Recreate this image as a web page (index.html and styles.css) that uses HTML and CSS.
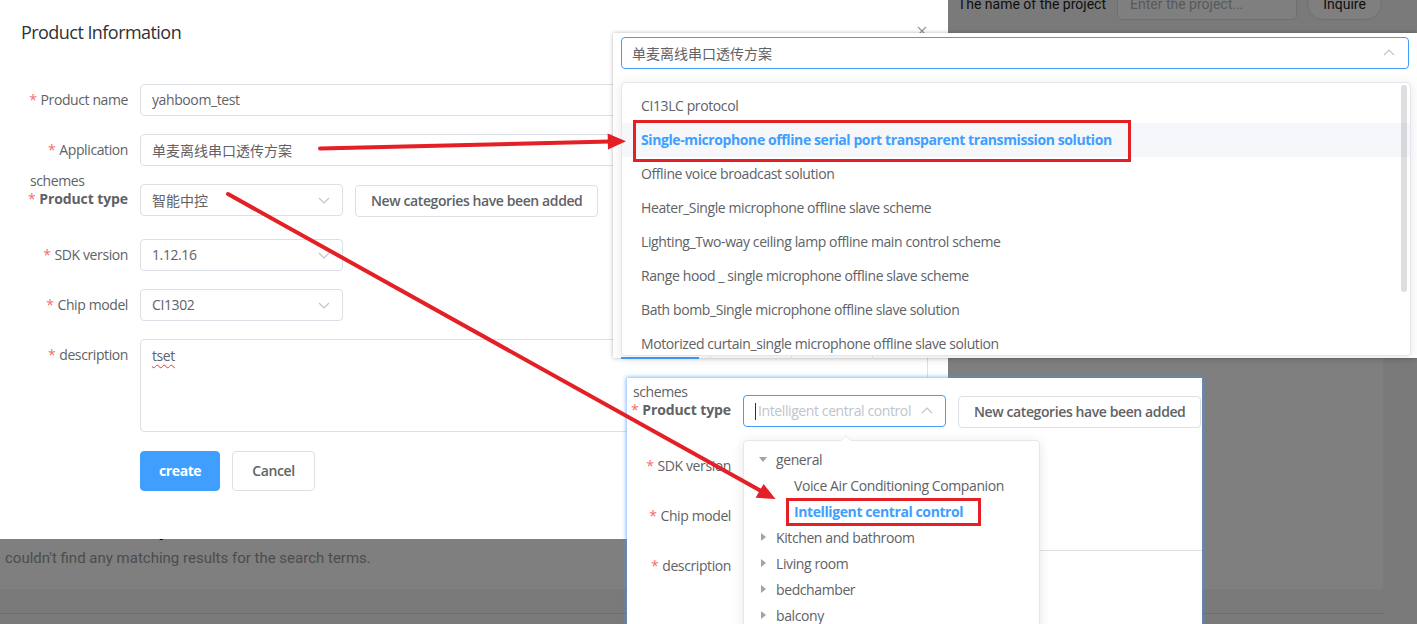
FILE: index.html
```html
<!DOCTYPE html>
<html lang="en">
<head>
<meta charset="utf-8">
<title>Product Information</title>
<link rel="stylesheet" href="styles.css">
</head>
<body>

<!-- project list page behind the dialog -->
<div class="page">
  <header class="topbar">
    <form class="search">
      <span class="search-label">The name of the project</span>
      <span class="search-input">Enter the project...</span>
      <span class="search-btn">Inquire</span>
    </form>
  </header>
  <main class="card">
    <h2 class="empty-title">No related items yet</h2>
    <p class="empty-text">couldn't find any matching results for the search terms.</p>
  </main>
  <div class="card-next"></div>
</div>

<div class="mask"></div>

<!-- dialog -->
<section class="dialog">
  <div class="dialog-head">
    <h1 class="dialog-title">Product Information</h1>
    <svg class="dialog-close" viewBox="0 0 10 10" width="10" height="10"><path d="M1 1l8 8M9 1l-8 8" stroke="#909399" stroke-width="1.2" fill="none"/></svg>
  </div>
  <div class="dialog-body">
    <div class="row">
      <label class="label"><span class="req">*</span>Product name</label>
      <div class="field"><div class="input">yahboom_test</div></div>
    </div>
    <div class="row">
      <label class="label"><span class="req">*</span>Application</label>
      <div class="field"><div class="input"><span class="zh">单麦离线串口透传方案</span></div></div>
    </div>
    <div class="row row-type">
      <label class="label label-stack">
        <span class="label-note">schemes</span>
        <span class="label-main"><span class="req">*</span><b>Product type</b></span>
      </label>
      <div class="field field-inline">
        <div class="input select"><span class="zh">智能中控</span>
          <svg class="chev" viewBox="0 0 12 7" width="12" height="7"><path d="M1 1l5 5 5-5" fill="none" stroke="#c0c4cc" stroke-width="1.2"/></svg>
        </div>
        <span class="btn">New categories have been added</span>
      </div>
    </div>
    <div class="row">
      <label class="label"><span class="req">*</span>SDK version</label>
      <div class="field"><div class="input select">1.12.16
        <svg class="chev" viewBox="0 0 12 7" width="12" height="7"><path d="M1 1l5 5 5-5" fill="none" stroke="#c0c4cc" stroke-width="1.2"/></svg>
      </div></div>
    </div>
    <div class="row">
      <label class="label"><span class="req">*</span>Chip model</label>
      <div class="field"><div class="input select">CI1302
        <svg class="chev" viewBox="0 0 12 7" width="12" height="7"><path d="M1 1l5 5 5-5" fill="none" stroke="#c0c4cc" stroke-width="1.2"/></svg>
      </div></div>
    </div>
    <div class="row row-desc">
      <label class="label"><span class="req">*</span>description</label>
      <div class="field"><div class="input textarea"><span class="typo">tset</span></div></div>
    </div>
    <div class="actions">
      <span class="btn btn-primary">create</span>
      <span class="btn btn-plain">Cancel</span>
    </div>
  </div>
</section>

<!-- application scheme select, opened -->
<div class="shot shot-app">
  <div class="input input-focus app-input"><span class="zh">单麦离线串口透传方案</span>
    <svg class="chev chev-up" viewBox="0 0 12 7" width="12" height="7"><path d="M1 6l5-5 5 5" fill="none" stroke="#c0c4cc" stroke-width="1.2"/></svg>
  </div>
  <div class="popper app-list">
    <ul class="options">
      <li>CI13LC protocol</li>
      <li class="selected">Single-microphone offline serial port transparent transmission solution</li>
      <li>Offline voice broadcast solution</li>
      <li>Heater_Single microphone offline slave scheme</li>
      <li>Lighting_Two-way ceiling lamp offline main control scheme</li>
      <li>Range hood _ single microphone offline slave scheme</li>
      <li>Bath bomb_Single microphone offline slave solution</li>
      <li>Motorized curtain_single microphone offline slave solution</li>
    </ul>
    <span class="scrollbar"></span>
    <span class="mark mark-app"></span>
  </div>
  <div class="tabs"><span class="tab tab-on"></span><span class="tab"></span><span class="tab"></span></div>
</div>

<!-- product type cascader, opened -->
<div class="shot shot-type">
  <div class="row row-type">
    <label class="label label-stack label-narrow">
      <span class="label-note">schemes</span>
      <span class="label-main"><span class="req">*</span><b>Product type</b></span>
    </label>
    <div class="field field-inline">
      <div class="input select input-focus"><span class="caret-cursor"></span><span class="placeholder">Intelligent central control</span>
        <svg class="chev chev-up" viewBox="0 0 12 7" width="12" height="7"><path d="M1 6l5-5 5 5" fill="none" stroke="#c0c4cc" stroke-width="1.2"/></svg>
      </div>
      <span class="btn">New categories have been added</span>
    </div>
  </div>
  <div class="row">
    <label class="label label-narrow"><span class="req">*</span>SDK version</label>
    <div class="field"><div class="input select"></div></div>
  </div>
  <div class="row">
    <label class="label label-narrow"><span class="req">*</span>Chip model</label>
    <div class="field"><div class="input select"></div></div>
  </div>
  <div class="row">
    <label class="label label-narrow"><span class="req">*</span>description</label>
    <div class="field"><div class="input textarea textarea-wide"></div></div>
  </div>

  <div class="popper cascader">
    <ul class="tree">
      <li class="node open"><i class="tri tri-down"></i>general</li>
      <li class="leaf">Voice Air Conditioning Companion</li>
      <li class="leaf selected">Intelligent central control</li>
      <li class="node"><i class="tri tri-right"></i>Kitchen and bathroom</li>
      <li class="node"><i class="tri tri-right"></i>Living room</li>
      <li class="node"><i class="tri tri-right"></i>bedchamber</li>
      <li class="node"><i class="tri tri-right"></i>balcony</li>
    </ul>
    <span class="mark mark-type"></span>
  </div>
</div>

<!-- callout arrows -->
<svg class="arrows" viewBox="0 0 1417 624" width="1417" height="624">
  <g stroke="#e41f26" stroke-width="4" stroke-linecap="round" fill="none">
    <line x1="320" y1="148.5" x2="610" y2="141.6"/>
    <line x1="228" y1="194" x2="762" y2="491.5"/>
  </g>
  <g fill="#e41f26">
    <polygon points="626,141.2 607.6,133.4 608,149.4"/>
    <polygon points="775.5,499 755.6,497.8 763.6,484"/>
  </g>
</svg>

</body>
</html>
```

FILE: styles.css
```css
* { box-sizing: border-box; }

html, body { margin: 0; padding: 0; }

body {
  position: relative;
  width: 1417px;
  height: 624px;
  overflow: hidden;
  background: #f4f4f4;
  font-family: "Open Sans", "Noto Sans CJK SC", sans-serif;
  font-size: 14px;
  letter-spacing: -0.4px;
  color: #606266;
}

ul { list-style: none; margin: 0; padding: 0; }

.zh {
  font-family: "Noto Sans CJK SC", sans-serif;
  letter-spacing: 0;
}

/* ---------- page behind ---------- */
.page {
  margin-top: -12px;
  padding-right: 34px;
  font-family: Roboto, "Noto Sans CJK SC", sans-serif;
  letter-spacing: 0;
}

.topbar {
  height: 52px;
  display: flex;
  justify-content: flex-end;
}

.search {
  display: flex;
  align-items: center;
  height: 32px;
  margin: 0;
}

.search-label { color: #222; margin-right: 11px; }

.search-input {
  width: 180px;
  height: 32px;
  line-height: 30px;
  padding: 0 12px;
  border: 1px solid #dcdfe6;
  border-radius: 4px;
  background: #fff;
  color: #b0b3b8;
}

.search-btn {
  width: 75px;
  height: 32px;
  line-height: 30px;
  margin-left: 10px;
  margin-right: 1px;
  text-align: center;
  border: 1px solid #dcdfe6;
  border-radius: 16px;
  background: #fff;
  color: #222;
}

.card {
  height: 549px;
  background: #fff;
  display: flex;
  flex-direction: column;
  justify-content: flex-end;
  padding: 0 0 21px 5px;
}

.empty-title {
  margin: 0 0 6px;
  font-size: 20px;
  line-height: 26px;
  color: #111;
}

.empty-text {
  margin: 0;
  font-size: 15px;
  line-height: 20px;
  color: #999;
}

.card-next {
  height: 11px;
  margin-top: 24px;
  border-top: 1px solid #dcdcdc;
}

.mask {
  position: absolute;
  inset: 0;
  background: rgba(0, 0, 0, 0.5);
}

/* ---------- dialog ---------- */
.dialog {
  position: absolute;
  left: 0;
  top: 0;
  width: 948px;
  height: 539px;
  background: #fff;
}

.dialog-head {
  position: relative;
  padding: 20px 21px 10px;
}

.dialog-title {
  margin: 0;
  font-size: 18px;
  line-height: 24px;
  font-weight: 400;
  letter-spacing: -0.55px;
  color: #303133;
}

.dialog-close {
  position: absolute;
  right: 21px;
  top: 26px;
}

.dialog-body { padding: 30px 20px 0 0; }

/* ---------- form ---------- */
.row {
  display: flex;
  align-items: flex-start;
  margin-bottom: 18px;
}

.label {
  flex: none;
  width: 140px;
  padding-right: 12px;
  text-align: right;
  line-height: 32px;
  color: #606266;
}

.label-narrow { width: 116px; }

.req { color: #f56c6c; margin-right: 4px; }

.label-stack {
  display: flex;
  flex-direction: column;
  line-height: 18px;
  margin-top: -12px;
}

.label-note { text-align: left; padding-left: 30px; }
.label-narrow .label-note { padding-left: 6px; }

.label-main b { font-weight: 700; letter-spacing: -0.1px; }

.row-type { margin-bottom: 22px; }
.row-desc { margin-bottom: 19px; }

.field { flex: 1; min-width: 0; }

.field-inline { display: flex; align-items: flex-start; }

.input {
  position: relative;
  height: 32px;
  line-height: 30px;
  padding: 0 11px;
  border: 1px solid #dcdfe6;
  border-radius: 4px;
  background: #fff;
  color: #606266;
  white-space: nowrap;
  overflow: hidden;
}

.input-focus { border-color: #409eff; }

.select { width: 203px; }

.chev {
  position: absolute;
  right: 12px;
  top: 12px;
}

.chev-up { top: 11px; }

.textarea {
  height: 93px;
  padding: 5px 11px;
  line-height: 21px;
}

.textarea-wide { width: 800px; }

.typo {
  text-decoration: underline wavy #e53935;
  text-decoration-thickness: 1px;
  text-underline-offset: 3px;
}

.btn {
  display: inline-block;
  height: 32px;
  line-height: 30px;
  padding: 0 15px;
  margin-left: 12px;
  margin-top: 1px;
  border: 1px solid #dcdfe6;
  border-radius: 4px;
  background: #fff;
  color: #606266;
  font-weight: 600;
  white-space: nowrap;
}

.actions {
  display: flex;
  gap: 12px;
  padding-left: 140px;
}

.actions .btn {
  height: 40px;
  line-height: 38px;
  margin: 0;
  padding: 0 18px;
}

.btn-primary {
  background: #409eff;
  border-color: #409eff;
  color: #fff;
  font-weight: 700;
}

.actions .btn-plain { font-weight: 600; padding: 0 19px; }

/* ---------- opened dropdown panels ---------- */
.shot {
  position: absolute;
  background: #fff;
}

.shot-app {
  left: 613px;
  top: 33px;
  width: 804px;
  height: 325px;
  padding: 4px 0 0 8px;
  box-shadow: 0 0 4px rgba(0, 0, 0, 0.28);
}

.app-input {
  width: 788px;
  padding-left: 10px;
}

.app-input .chev { right: 13px; }

.popper {
  position: relative;
  background: #fff;
  border: 1px solid #e4e7ed;
  border-radius: 4px;
  box-shadow: 0 2px 12px rgba(0, 0, 0, 0.1);
}

.popper::before,
.popper::after {
  content: "";
  position: absolute;
  top: -6px;
  border: 6px solid transparent;
  border-top: 0;
  border-bottom-color: #e4e7ed;
}

.popper::after {
  top: -5px;
  border-bottom-color: #fff;
}

.app-list {
  width: 790px;
  height: 274px;
  margin-top: 13px;
  overflow: hidden;
}

.app-list::before,
.app-list::after { left: 388px; }

.options { padding-top: 6px; }

.options li {
  height: 34px;
  line-height: 34px;
  padding: 0 19px;
  color: #606266;
  white-space: nowrap;
}

.options li.selected,
.tree li.selected {
  color: #409eff;
  font-weight: 700;
}

.options li.selected { background: #f5f7fa; }

.scrollbar {
  position: absolute;
  right: 3px;
  top: 2px;
  width: 6px;
  height: 207px;
  border-radius: 3px;
  background: rgba(144, 147, 153, 0.3);
}

.mark {
  position: absolute;
  border: 3px solid #e41f26;
}

.mark-app {
  left: 11px;
  top: 37px;
  width: 498px;
  height: 42px;
}

.tabs {
  display: flex;
  height: 3px;
}

.tab {
  width: 90px;
  border-right: 1px solid #e4e7ed;
}

.tab-on {
  width: 90px;
  background: linear-gradient(to bottom, transparent 1px, #409eff 1px, #409eff 3px, transparent 3px);
  background-size: 78px 100%;
  background-repeat: no-repeat;
}

.tab + .tab { width: 81px; }

.shot-type {
  left: 627px;
  top: 378px;
  width: 575px;
  height: 246px;
  padding-top: 17px;
  overflow: hidden;
  box-shadow: 0 0 4px 1px rgba(64, 150, 255, 0.65);
}

.caret-cursor {
  display: inline-block;
  width: 1px;
  height: 17px;
  margin-right: 2px;
  vertical-align: -4px;
  background: #303133;
}

.placeholder { color: #c0c4cc; }

.cascader {
  position: absolute;
  left: 116px;
  top: 62px;
  width: 297px;
  height: 240px;
}

.cascader::before,
.cascader::after { left: 96px; }

.tree { padding-top: 5px; }

.tree li {
  display: flex;
  align-items: center;
  height: 26px;
  padding-left: 14px;
  color: #606266;
  white-space: nowrap;
}

.tree li.leaf { padding-left: 50px; }

.tri {
  width: 10px;
  height: 10px;
  margin-right: 8px;
  display: flex;
  justify-content: center;
  align-items: center;
}

.tri::before {
  content: "";
  border: 4px solid transparent;
}

.tri-down::before {
  border-bottom: 0;
  border-top: 5px solid #a0a3a8;
}

.tri-right::before {
  border-right: 0;
  border-left: 5px solid #a0a3a8;
}

.mark-type {
  left: 42px;
  top: 57px;
  width: 195px;
  height: 28px;
}

/* ---------- annotation arrows ---------- */
.arrows {
  position: absolute;
  left: 0;
  top: 0;
  pointer-events: none;
}
```
